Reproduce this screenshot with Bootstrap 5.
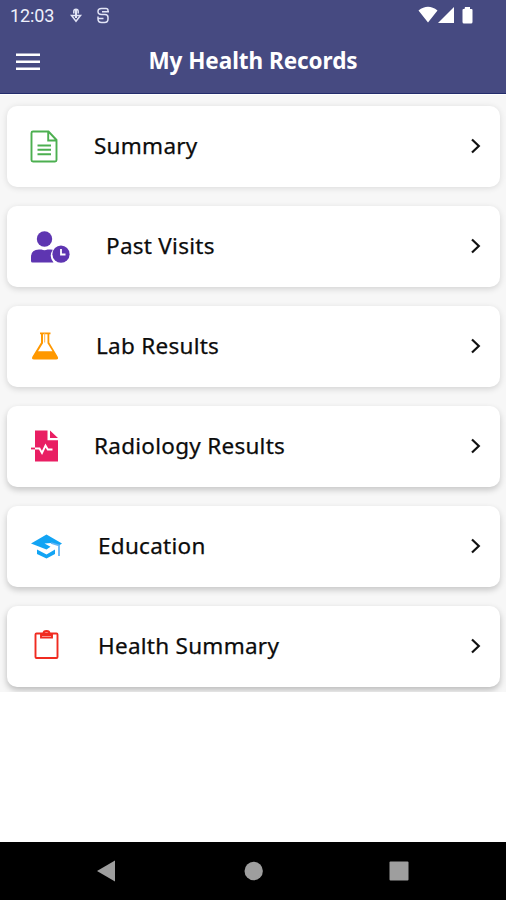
<!DOCTYPE html>
<html lang="en">
<head>
<meta charset="utf-8">
<meta name="viewport" content="width=device-width, initial-scale=1">
<title>My Health Records</title>
<link href="https://cdn.jsdelivr.net/npm/bootstrap@5.3.0/dist/css/bootstrap.min.css" rel="stylesheet">
<style>
body{font-family:"Noto Sans","Open Sans",sans-serif;height:900px;overflow:hidden}
svg{display:block;flex:none}
.app-top{background:#464a81;height:94px;border-bottom:1px solid #232c6b}
.status{height:32px;padding:0 33px 0 10px}
.clock{font:400 18px/32px Roboto,sans-serif;color:#eef0fb;width:60px;letter-spacing:-.1px}
.title-bar{height:57px;padding-left:16px;padding-right:16px}
.title-bar h1{font-size:22.500px;font-weight:700;line-height:30px;letter-spacing:-.05px}
.records{background:#f7f7f7;height:598px;padding:11px 6px 0 7px;gap:19px;overflow:hidden;border-top:1px solid #fff}
.record{height:81px;border-radius:10px;padding:0 18px 0 20px;color:#111;background:#fff;flex:none;box-shadow:0 2px 6px rgba(0,0,0,.15)}
.record:first-child{box-shadow:0 1px 6px rgba(0,0,0,.12)}
.record:nth-child(n+4){box-shadow:0 3px 6px rgba(0,0,0,.2)}
.record:last-child{box-shadow:0 3px 6px rgba(0,0,0,.25)}
.record-name{font-size:22.500px;font-weight:400;line-height:30px;letter-spacing:.27px;padding-bottom:2px;color:#0c0c0c;-webkit-text-stroke:.25px #0c0c0c}
.in-0{padding-left:16px}.in-1{padding-left:18px}.in-2{padding-left:20px}.in-3{padding-left:28px}
.sys-nav{height:58px;background:#000}
</style>
</head>
<body class="d-flex flex-column bg-white m-0">
<header class="app-top text-white">
  <div class="status d-flex align-items-center">
    <span class="clock">12:03</span>
    <svg width="42" height="32" viewBox="70 0 42 32" fill="none" stroke="#e2e4f6" stroke-width="1.500"><path d="M73.800 13.500V11.500a2.200 2.200 0 0 1 4.400 0v2M71.500 15.500h9L76 21.200z"/><path d="M76 10v8" stroke-width="2"/><path d="M108 12.500v-2q0-2-2-2h-4.500q-3.500 0-3.500 3t3.500 3h3.500q3 0 3 3v1.500q0 3.500-3.500 3.500h-3q-3.500 0-3.500-3.500v-2.500M109 11.700h-7M97.500 18.500h6" stroke-width="1.500"/></svg>
    <svg class="ms-auto" width="56" height="32" viewBox="417 0 56 32" fill="#fff"><path d="M418.500 10.500Q428 3 437.500 10.500L428 22.500zM454 7v16h-16zM465 7h5v2h1.500q1 0 1 1v12q0 1.500-1.500 1.500h-7q-1.500 0-1.500-1.500V10q0-1 1-1h1z"/></svg>
  </div>
  <div class="title-bar d-flex align-items-center">
    <svg width="24" height="20" viewBox="0 0 24 20" fill="#fff"><path d="M0 2.500h24v2.500H0zM0 9.500h24V12H0zM0 16.500h24V19H0z"/></svg>
    <h1 class="flex-grow-1 text-center m-0 pe-4">My Health Records</h1>
  </div>
</header>
<main class="records d-flex flex-column">
  <a class="record d-flex align-items-center text-decoration-none">
    <svg width="51" height="41" viewBox="27 126 51 41" fill="none" stroke="#4caf50" stroke-width="1.900"><path d="M33 131.500h15.500l8 8.500v20q0 1.500-1.500 1.500H33q-1.500 0-1.500-1.500v-27q0-1.500 1.500-1.500zM48.200 132v8.500h8M37.500 145.500h13.500M37.500 149.800h13.500M37.500 154.300h13.500"/></svg>
    <span class="record-name in-0">Summary</span>
    <svg class="ms-auto" width="12" height="17" viewBox="0 0 12 17" fill="none" stroke="#111" stroke-width="2.200"><path d="M2 1.500 8.800 8 2 14.500"/></svg>
  </a>
  <a class="record d-flex align-items-center text-decoration-none">
    <svg width="51" height="41" viewBox="27 125.500 51 41" fill="#5e35b1"><circle cx="44.500" cy="138.500" r="7.700"/><path d="M31 160.500v-4q0-7.500 8-7.500h2.500q3 1.300 6 0h3q1.200 0 2.300.3-4.500 6.700.7 12.700H32.500q-1.500 0-1.500-1.500z"/><circle cx="61" cy="153.700" r="8.600"/><path d="M61 148.500v5.500h4.500" fill="none" stroke="#fff" stroke-width="1.800"/></svg>
    <span class="record-name in-3">Past Visits</span>
    <svg class="ms-auto" width="12" height="17" viewBox="0 0 12 17" fill="none" stroke="#111" stroke-width="2.200"><path d="M2 1.500 8.800 8 2 14.500"/></svg>
  </a>
  <a class="record d-flex align-items-center text-decoration-none">
    <svg width="51" height="41" viewBox="27 126 51 41" fill="#ff9800"><path d="M40 132.500h10.500v1.700H49.300v8.300l8.300 14q1.500 3-1.500 3H34q-3 0-1.500-3l8.500-14v-8.300H40zm3 1.700v9l-5 8h14.500l-5-8v-9z" fill-rule="evenodd"/><path d="M44.700 133v9.500" stroke="#ffb74d" stroke-width="1"/></svg>
    <span class="record-name in-1">Lab Results</span>
    <svg class="ms-auto" width="12" height="17" viewBox="0 0 12 17" fill="none" stroke="#111" stroke-width="2.200"><path d="M2 1.500 8.800 8 2 14.500"/></svg>
  </a>
  <a class="record d-flex align-items-center text-decoration-none">
    <svg width="51" height="41" viewBox="27 126 51 41"><path d="M35 130.500h12.500v9.800H58V161.500H35zM50 130.500l8 7.500h-8z" fill="#e91e63"/><path d="M31 148.500h5" stroke="#e91e63" stroke-width="1.800"/><path d="M35 148.500h4.500l2.500 4.500 3.500-7.500 2.300 4h4.700" fill="none" stroke="#fff" stroke-width="1.900"/></svg>
    <span class="record-name in-0">Radiology Results</span>
    <svg class="ms-auto" width="12" height="17" viewBox="0 0 12 17" fill="none" stroke="#111" stroke-width="2.200"><path d="M2 1.500 8.800 8 2 14.500"/></svg>
  </a>
  <a class="record d-flex align-items-center text-decoration-none">
    <svg width="51" height="41" viewBox="27 126 51 41" fill="#12a4f4"><path d="M31 143.500 46.500 134.500 62 143.500l-3 2-8-2.500-6.500.5 6 3.200-4 2.800zM37 149.500l9.500 5 8.500-5v4.500l-8.500 4.500-9.500-4.500z"/><path d="M51 143l8 2.500v10.500" fill="none" stroke="#64b5f6" stroke-width="1.800"/></svg>
    <span class="record-name in-2">Education</span>
    <svg class="ms-auto" width="12" height="17" viewBox="0 0 12 17" fill="none" stroke="#111" stroke-width="2.200"><path d="M2 1.500 8.800 8 2 14.500"/></svg>
  </a>
  <a class="record d-flex align-items-center text-decoration-none">
    <svg width="51" height="41" viewBox="27 126 51 41" fill="none" stroke="#f02b20" stroke-width="1.900"><rect x="35.500" y="133.500" width="22" height="24.500" rx="1"/><path d="M41 133v4.500h11V133M43.500 133.500q0-2.500 3-2.500t3 2.500M41.500 135h10"/></svg>
    <span class="record-name in-2">Health Summary</span>
    <svg class="ms-auto" width="12" height="17" viewBox="0 0 12 17" fill="none" stroke="#111" stroke-width="2.200"><path d="M2 1.500 8.800 8 2 14.500"/></svg>
  </a>
</main>
<footer class="sys-nav mt-auto">
  <svg width="506" height="58" viewBox="0 842 506 58" fill="#9e9e9e"><path d="M97 871l18-10.500v21z"/><circle cx="253.700" cy="871" r="9.200"/><rect x="389.500" y="861.500" width="19" height="19" rx="1"/></svg>
</footer>
<script src="https://cdn.jsdelivr.net/npm/bootstrap@5.3.0/dist/js/bootstrap.bundle.min.js"></script>
</body>
</html>
